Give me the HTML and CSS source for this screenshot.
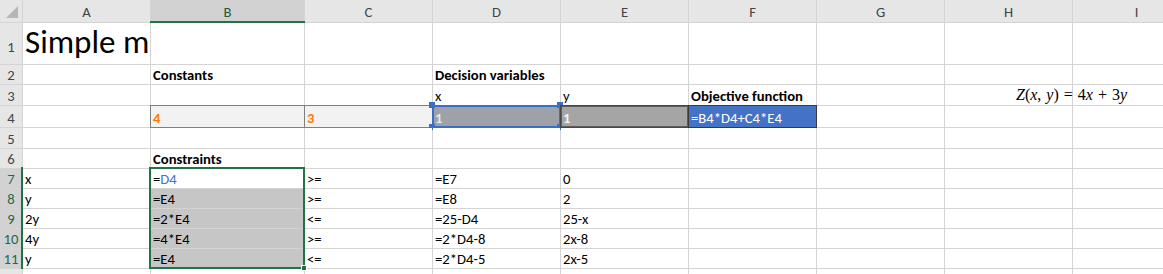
FILE: index.html
```html
<!DOCTYPE html>
<html>
<head>
<meta charset="utf-8">
<title>Simple maximization</title>
<link rel="stylesheet" href="styles.css">
</head>
<body>
<div class="sheet">
  <!-- header row -->
  <div class="h corner"><svg width="22" height="22" viewBox="0 0 22 22"><polygon points="18,6 18,18 6,18" fill="#b5b5b5"/></svg></div>
  <div class="h">A</div>
  <div class="h hsel">B</div>
  <div class="h">C</div>
  <div class="h">D</div>
  <div class="h">E</div>
  <div class="h">F</div>
  <div class="h">G</div>
  <div class="h">H</div>
  <div class="h">I</div>

  <!-- row 1 -->
  <div class="rh r1">1</div>
  <div class="c title">Simple maximization problem</div>
  <div class="c"></div><div class="c"></div><div class="c"></div><div class="c"></div><div class="c"></div><div class="c"></div><div class="c"></div><div class="c"></div>

  <!-- row 2 -->
  <div class="rh">2</div>
  <div class="c"></div>
  <div class="c b">Constants</div>
  <div class="c"></div>
  <div class="c b">Decision variables</div>
  <div class="c"></div><div class="c"></div><div class="c"></div><div class="c"></div><div class="c"></div>

  <!-- row 3 -->
  <div class="rh">3</div>
  <div class="c"></div><div class="c"></div><div class="c"></div>
  <div class="c">x</div>
  <div class="c">y</div>
  <div class="c b">Objective function</div>
  <div class="c"></div><div class="c"></div><div class="c"></div>

  <!-- row 4 -->
  <div class="rh">4</div>
  <div class="c"></div>
  <div class="c calc">4</div>
  <div class="c calc">3</div>
  <div class="c var-x">1<span class="hdl tl"></span><span class="hdl tr"></span><span class="hdl bl"></span><span class="hdl br"></span></div>
  <div class="c var-y">1</div>
  <div class="c obj">=B4*D4+C4*E4</div>
  <div class="c"></div><div class="c"></div><div class="c"></div>

  <!-- row 5 -->
  <div class="rh">5</div>
  <div class="c"></div><div class="c"></div><div class="c"></div><div class="c"></div><div class="c"></div><div class="c"></div><div class="c"></div><div class="c"></div><div class="c"></div>

  <!-- row 6 -->
  <div class="rh">6</div>
  <div class="c"></div>
  <div class="c b">Constraints</div>
  <div class="c"></div><div class="c"></div><div class="c"></div><div class="c"></div><div class="c"></div><div class="c"></div><div class="c"></div>

  <!-- row 7 -->
  <div class="rh rsel">7</div>
  <div class="c">x</div>
  <div class="c">=<span class="ref">D4</span></div>
  <div class="c">&gt;=</div>
  <div class="c">=E7</div>
  <div class="c">0</div>
  <div class="c"></div><div class="c"></div><div class="c"></div><div class="c"></div>

  <!-- row 8 -->
  <div class="rh rsel">8</div>
  <div class="c">y</div>
  <div class="c sfill">=E4</div>
  <div class="c">&gt;=</div>
  <div class="c">=E8</div>
  <div class="c">2</div>
  <div class="c"></div><div class="c"></div><div class="c"></div><div class="c"></div>

  <!-- row 9 -->
  <div class="rh rsel">9</div>
  <div class="c">2y</div>
  <div class="c sfill">=2*E4</div>
  <div class="c">&lt;=</div>
  <div class="c">=25-D4</div>
  <div class="c">25-x</div>
  <div class="c"></div><div class="c"></div><div class="c"></div><div class="c"></div>

  <!-- row 10 -->
  <div class="rh rsel">10</div>
  <div class="c">4y</div>
  <div class="c sfill">=4*E4</div>
  <div class="c">&gt;=</div>
  <div class="c">=2*D4-8</div>
  <div class="c">2x-8</div>
  <div class="c"></div><div class="c"></div><div class="c"></div><div class="c"></div>

  <!-- row 11 -->
  <div class="rh rsel">11</div>
  <div class="c">y</div>
  <div class="c sfill">=E4</div>
  <div class="c">&lt;=</div>
  <div class="c">=2*D4-5</div>
  <div class="c">2x-5</div>
  <div class="c"></div><div class="c"></div><div class="c"></div><div class="c"></div>

  <!-- row 12 (only its top edge is visible) -->
  <div class="rh"></div>
  <div class="c"></div><div class="c"></div><div class="c"></div><div class="c"></div><div class="c"></div><div class="c"></div><div class="c"></div><div class="c"></div><div class="c"></div>

  <!-- overlays -->
  <div class="col-mark"></div>
  <div class="row-mark"></div>
  <div class="selection"></div>
  <div class="equation"><i>Z</i>(<i>x</i>, <i>y</i>) = 4<i>x</i> + 3<i>y</i></div>
</div>
</body>
</html>
```

FILE: styles.css
```css
html, body {
  margin: 0;
  padding: 0;
  background: #ffffff;
}

.sheet {
  position: relative;
  display: grid;
  grid-template-columns: 22px 127px 153px 127px 127px 127px 127px 127px 127px 127px;
  grid-template-rows: 22px 41px 19px 20px 21px 20px 19px 19px 19px 19px 19px 19px 19px;
  gap: 1px;
  background: #d4d4d4;
  width: 1163px;
  height: 274px;
  overflow: hidden;
  font-family: Carlito, Lato, "Liberation Sans", sans-serif;
  font-size: 14.67px;
  color: #000000;
}

/* column headers */
.h {
  background: #e6e6e6;
  color: #444444;
  display: flex;
  align-items: center;
  justify-content: center;
  line-height: 18px;
  padding-top: 2px;
}

.corner {
  padding: 0;
  align-items: stretch;
  justify-content: stretch;
}

.hsel {
  background: #d2d2d2;
  color: #1e5c3a;
}

/* row headers */
.rh {
  background: #e6e6e6;
  color: #444444;
  display: flex;
  align-items: flex-end;
  justify-content: center;
  line-height: 18px;
}

.r1 {
  padding-bottom: 8px;
}

.rsel {
  background: #d2d2d2;
  color: #1e6b46;
}

/* cells */
.c {
  position: relative;
  background: #ffffff;
  display: flex;
  align-items: flex-end;
  padding: 0 2px;
  line-height: 18px;
  white-space: nowrap;
  min-width: 0;
}

.b {
  font-weight: bold;
}

.title {
  font-size: 33px;
  line-height: 40px;
  padding-bottom: 2px;
  overflow: hidden;
}

.calc {
  background: #f2f2f2;
  color: #fa7d00;
  font-weight: bold;
  outline: 1px solid #7f7f7f;
}

.var-x {
  background: #9fa1a9;
  color: #e4e7ee;
  font-weight: bold;
  outline: 1px solid #3a6fc6;
  box-shadow: inset 0 0 0 1px #3a6fc6;
}

.var-y {
  background: #a5a5a5;
  color: #f4f4f4;
  font-weight: bold;
  outline: 1px solid #474747;
  box-shadow: inset 0 0 0 1px #5c5c5c;
}

.obj {
  background: #4472c4;
  color: #ffffff;
  outline: 1px solid #3a3a3a;
}

.hdl {
  position: absolute;
  width: 6px;
  height: 6px;
  background: #3a6fc6;
}
.hdl.tl { left: -4px; top: -4px; }
.hdl.tr { right: -3px; top: -4px; }
.hdl.bl { left: -4px; bottom: -3px; }
.hdl.br { right: -3px; bottom: -3px; }

.ref {
  color: #4472c4;
}

.sfill {
  background: #c6c6c6;
}

/* selection overlays (absolutely positioned inside their grid areas) */
.col-mark {
  position: absolute;
  grid-column: 3 / 4;
  grid-row: 1 / 2;
  left: -1px;
  right: -1px;
  bottom: -1px;
  height: 2px;
  background: #217346;
}

.row-mark {
  position: absolute;
  grid-column: 1 / 2;
  grid-row: 8 / 13;
  top: -2px;
  bottom: -1px;
  right: -1px;
  width: 2px;
  background: #217346;
}

.selection {
  position: absolute;
  grid-column: 3 / 4;
  grid-row: 8 / 13;
  top: -2px;
  left: -2px;
  right: -1px;
  bottom: -1px;
  border: 2px solid #217346;
}

.selection::after {
  content: "";
  position: absolute;
  right: -4px;
  bottom: -4px;
  width: 4px;
  height: 4px;
  background: #217346;
  border: 1px solid #ffffff;
}

/* floating equation object */
.equation {
  position: absolute;
  grid-column: 9 / 11;
  grid-row: 4 / 5;
  left: 71px;
  bottom: 1px;
  font-family: "Liberation Serif", "DejaVu Serif", serif;
  font-size: 16px;
  line-height: 18px;
  white-space: nowrap;
  color: #000000;
  word-spacing: 1px;
}
```
